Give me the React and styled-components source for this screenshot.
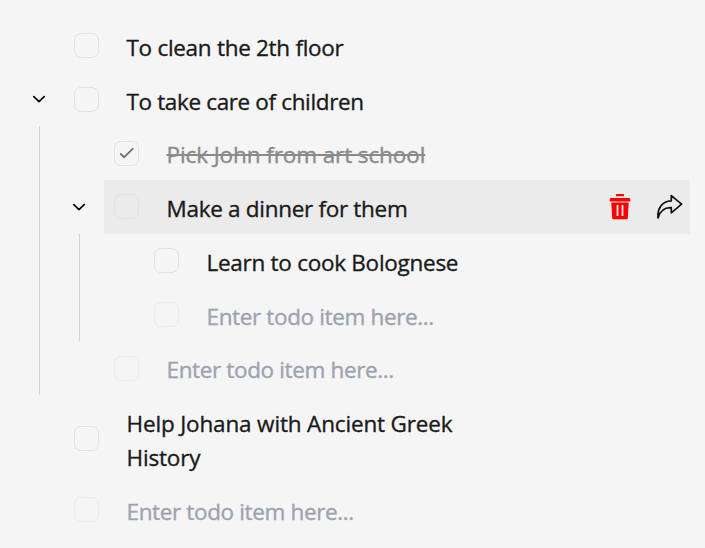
import React from "react";
import styled, { createGlobalStyle } from "styled-components";

const GlobalStyle = createGlobalStyle`
  * { box-sizing: border-box; }
  body { margin: 0; background: #f5f5f5; font-family: "Open Sans", "Noto Sans", sans-serif; }
`;

const Page = styled.main`
  width: 705px;
  height: 548px;
  overflow: hidden;
  padding: 18.75px 15px 0 14px;
  background: #f5f5f5;
`;

const Line = styled.div`
  display: grid;
  grid-template-columns: 50px 1fr;
  align-items: center;
`;

const Toggle = styled.button`
  display: flex;
  justify-content: center;
  padding: 0;
  border: 0;
  background: none;
`;

const Row = styled.div`
  display: flex;
  align-items: center;
  min-height: 53.75px;
  padding: 10px 7px 10px 10px;
  background: ${(p) => (p.$active ? "#ebebeb" : "transparent")};
`;

const Box = styled.span`
  display: flex;
  align-items: center;
  justify-content: center;
  flex: none;
  width: 25px;
  height: 25px;
  margin-right: 27.5px;
  border: 1px solid ${(p) => (p.$faint ? "#ebebec" : "#dfe1e6")};
  border-radius: 7px;
`;

const Label = styled.span`
  position: relative;
  top: 2px;
  width: 345px;
  font-size: 22.5px;
  line-height: 33.75px;
  font-weight: 500;
  -webkit-text-stroke: 0.35px currentColor;
  letter-spacing: ${(p) => p.$track || 0}px;
  color: ${(p) => (p.$tone === "done" ? "#8a8a8a" : p.$tone === "hint" ? "#9ca3af" : "#1a1a1a")};
  text-decoration: ${(p) => (p.$tone === "done" ? "line-through" : "none")};
  text-decoration-thickness: 2px;
`;

const Actions = styled.div`
  display: flex;
  align-items: center;
  gap: 26px;
  margin-left: auto;
`;

const Children = styled.div`
  margin-left: 25px;
  padding-left: 14px;
  border-left: 1px solid #d1d1d4;
`;

const Chevron = () => (
  <svg width="14" height="8" viewBox="0 0 14 8" fill="none" stroke="#000" strokeWidth="1.7" strokeLinecap="round" strokeLinejoin="round">
    <path d="M1.8 1.7 7 6.7 12.2 1.7" />
  </svg>
);

const Check = () => (
  <svg width="15" height="12" viewBox="0 0 15 12" fill="none" stroke="#6b7280" strokeWidth="1.9" strokeLinecap="round" strokeLinejoin="round">
    <path d="M1.8 7 5.2 10.2 13.6 1.8" />
  </svg>
);

const Trash = () => (
  <svg width="22" height="26" viewBox="0 0 22 26" fill="#f00">
    <path d="M7.7 0h6.6q.7 0 .7.7V2.3H7V.7q0-.7.7-.7zM2 4h18q1.3 0 1.3 1.3V7.4H.7V5.3Q.7 4 2 4z" />
    <path fillRule="evenodd" d="M2.3 8.6h17.4L18.8 24q-.1 1.2-1.2 1.2H4.4q-1.1 0-1.2-1.2zM7.6 11v11h1.8V11zm5 0v11h1.8V11z" />
  </svg>
);

const Share = () => (
  <svg width="26" height="26" viewBox="0 0 26 26" fill="none" stroke="#111" strokeWidth="1.7" strokeLinejoin="round">
    <path d="M14.3 1.6 24.6 10.2 14.3 18.8V13.7C7.5 13.4 3.2 16 1 24 .1 14.5 5 7 14.3 6.8Z" />
  </svg>
);

const items = [
  { text: "To clean the 2th floor", track: -0.29 },
  {
    text: "To take care of children",
    track: -0.36,
    children: [
      { text: "Pick John from art school", tone: "done", track: -0.1 },
      {
        text: "Make a dinner for them",
        active: true,
        track: -0.3,
        children: [
          { text: "Learn to cook Bolognese", track: -0.27 },
          { text: "Enter todo item here...", tone: "hint", track: -0.36 },
        ],
      },
      { text: "Enter todo item here...", tone: "hint", track: -0.36 },
    ],
  },
  { text: "Help Johana with Ancient Greek History", track: -0.16 },
  { text: "Enter todo item here...", tone: "hint", track: -0.36 },
];

const Todo = ({ item }) => (
  <>
    <Line>
      {item.children ? <Toggle aria-label="Collapse"><Chevron /></Toggle> : <span />}
      <Row $active={item.active}>
        <Box $faint={item.tone === "hint"}>{item.tone === "done" && <Check />}</Box>
        <Label $tone={item.tone} $track={item.track}>{item.text}</Label>
        {item.active && <Actions><Trash /><Share /></Actions>}
      </Row>
    </Line>
    {item.children && (
      <Children>
        {item.children.map((child, i) => <Todo key={i} item={child} />)}
      </Children>
    )}
  </>
);

export default function App() {
  return (
    <>
      <GlobalStyle />
      <Page>{items.map((item, i) => <Todo key={i} item={item} />)}</Page>
    </>
  );
}
